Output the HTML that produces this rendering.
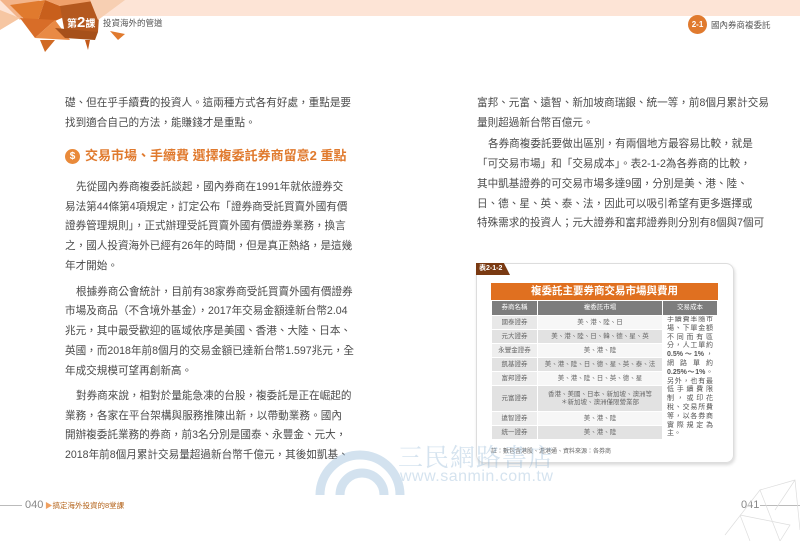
<!DOCTYPE html>
<html><head><meta charset="utf-8"><style>
*{margin:0;padding:0;box-sizing:border-box}
body{width:800px;height:541px;overflow:hidden;background:#fff;position:relative;font-family:"Liberation Sans","Noto Sans CJK TC",sans-serif;color:#444}
.a{position:absolute;white-space:nowrap}
.ln{position:absolute;font-size:10.6px;line-height:14px;color:#4a4a4a;text-align:justify;text-align-last:justify;white-space:nowrap}
.L{left:65px;width:277px}
.R{left:477px;width:258px}
.e{text-align-last:left}
table{border-collapse:collapse;table-layout:fixed}
td{font-size:6.5px;color:#666;text-align:center;border:1px solid #fff;padding:0;line-height:8px;overflow:hidden}
</style></head><body>
<div class="a" style="left:0;top:0;width:800px;height:16px;background:#fde4d6"></div>
<svg class="a" style="left:0;top:0" width="130" height="62" viewBox="0 0 130 62">
<polygon points="0,0 40,0 20,20" fill="#f3b48a"/>
<polygon points="10,5 45,0 35,30" fill="#e07a2e"/>
<polygon points="35,30 45,0 75,12" fill="#c85f1c"/>
<polygon points="45,0 95,0 75,12" fill="#f0a06a"/>
<polygon points="60,6 100,0 98,32 65,34" fill="#b4581e"/>
<polygon points="20,18 55,20 35,38" fill="#d86d28"/>
<polygon points="35,38 55,20 70,40" fill="#e98a45"/>
<polygon points="55,28 98,32 95,40 65,38" fill="#a6501a"/>
<polygon points="0,10 20,18 0,30" fill="#f6c6a2"/>
<polygon points="90,0 125,0 98,20" fill="#f7cfb2"/>
<polygon points="110,31 125,34 118,40" fill="#e07a2e"/>
<polygon points="40,40 55,40 45,52" fill="#d06a24"/>
<polygon points="85,40 90,40 88,50" fill="#c35a1a"/>
</svg>
<div class="a" style="left:67px;top:16px;font-size:10px;color:#fff;font-weight:bold;line-height:14px">第<span style="font-size:15px">2</span>課</div>
<div class="a" style="left:103px;top:17px;font-size:8.5px;color:#555;line-height:12px">投資海外的管道</div>
<div class="a" style="left:688px;top:15px;width:19px;height:19px;border-radius:50%;background:#e07a2e;color:#fff;font-size:8px;font-weight:bold;text-align:center;line-height:19px">2-1</div>
<div class="a" style="left:711px;top:19px;font-size:8.5px;color:#555;line-height:12px">國內券商複委託</div>

<div class="ln L" style="top:96px">礎、但在乎手續費的投資人。這兩種方式各有好處，重點是要</div>
<div class="ln L e" style="top:116px">找到適合自己的方法，能賺錢才是重點。</div>
<div class="a" style="left:65px;top:149px;width:15px;height:15px;border-radius:50%;background:#e98a3a;color:#fff;font-size:10px;font-weight:bold;text-align:center;line-height:15px">$</div>
<div class="a" style="left:85px;top:148px;font-size:13px;color:#e07a2e;font-weight:bold;line-height:16px">交易市場、手續費 選擇複委託券商留意2 重點</div>
<div class="ln L" style="top:180px;padding-left:11px">先從國內券商複委託談起，國內券商在1991年就依證券交</div>
<div class="ln L" style="top:200px">易法第44條第4項規定，訂定公布「證券商受託買賣外國有價</div>
<div class="ln L" style="top:219px">證券管理規則」，正式辦理受託買賣外國有價證券業務，換言</div>
<div class="ln L" style="top:239px">之，國人投資海外已經有26年的時間，但是真正熱絡，是這幾</div>
<div class="ln L e" style="top:259px">年才開始。</div>
<div class="ln L" style="top:285px;padding-left:11px">根據券商公會統計，目前有38家券商受託買賣外國有價證券</div>
<div class="ln L" style="top:304px">市場及商品（不含境外基金），2017年交易金額達新台幣2.04</div>
<div class="ln L" style="top:324px">兆元，其中最受歡迎的區域依序是美國、香港、大陸、日本、</div>
<div class="ln L" style="top:344px">英國，而2018年前8個月的交易金額已達新台幣1.597兆元，全</div>
<div class="ln L e" style="top:364px">年成交規模可望再創新高。</div>
<div class="ln L" style="top:389px;padding-left:11px">對券商來說，相對於量能急凍的台股，複委託是正在崛起的</div>
<div class="ln L" style="top:409px">業務，各家在平台架構與服務推陳出新，以帶動業務。國內</div>
<div class="ln L" style="top:428px">開辦複委託業務的券商，前3名分別是國泰、永豐金、元大，</div>
<div class="ln L" style="top:448px">2018年前8個月累計交易量超過新台幣千億元，其後如凱基、</div>

<div class="ln R" style="top:96px">富邦、元富、遠智、新加坡商瑞銀、統一等，前8個月累計交易</div>
<div class="ln R e" style="top:116px">量則超過新台幣百億元。</div>
<div class="ln R" style="top:137px;padding-left:11px">各券商複委託要做出區別，有兩個地方最容易比較，就是</div>
<div class="ln R" style="top:157px">「可交易市場」和「交易成本」。表2-1-2為各券商的比較，</div>
<div class="ln R" style="top:177px">其中凱基證券的可交易市場多達9國，分別是美、港、陸、</div>
<div class="ln R" style="top:197px">日、德、星、英、泰、法，因此可以吸引希望有更多選擇或</div>
<div class="ln R" style="top:216px">特殊需求的投資人；元大證券和富邦證券則分別有8個與7個可</div>

<div class="a" style="left:476px;top:263px;width:258px;height:200px;border:1px solid #ddd;border-radius:8px;box-shadow:1px 2px 3px rgba(0,0,0,.15)"></div>
<div class="a" style="left:476px;top:263px;width:34px;height:12px;background:#7a3a12;clip-path:polygon(0 0,82% 0,100% 100%,0 100%);color:#fff;font-size:7px;font-weight:bold;line-height:12px;padding-left:3px">表2-1-2</div>
<div class="a" style="left:491px;top:283px;width:227px;height:17px;background:#e07020;color:#fff;font-size:10.5px;font-weight:bold;text-align:center;line-height:17px">複委託主要券商交易市場與費用</div>
<table class="a" style="left:491px;top:300px;width:227px">
<tr style="height:15px;background:#7d7d7d"><td style="width:46px;color:#fff">券商名稱</td><td style="width:125px;color:#fff">複委託市場</td><td style="color:#fff">交易成本</td></tr>
<tr style="height:13px"><td style="background:#e8e8e8">國泰證券</td><td style="background:#f7f7f7">美、港、陸、日</td><td rowspan="8" style="background:#fff;text-align:justify;font-size:7px;line-height:8.8px;padding:0 4px;color:#555;white-space:normal">手續費率隨市場、下單金額不同而有區分，人工單約<b>0.5%～1%</b>，網路單約<b>0.25%～1%</b>。另外，也有最低手續費限制，或印花稅、交易所費等，以各券商實際規定為主。</td></tr>
<tr style="height:13px;background:#e2e2e2"><td>元大證券</td><td>美、港、陸、日、韓、德、星、英</td></tr>
<tr style="height:13px"><td style="background:#eee">永豐金證券</td><td style="background:#f7f7f7">美、港、陸</td></tr>
<tr style="height:13px;background:#e2e2e2"><td>凱基證券</td><td>美、港、陸、日、德、星、英、泰、法</td></tr>
<tr style="height:13px"><td style="background:#eee">富邦證券</td><td style="background:#f7f7f7">美、港、陸、日、英、德、星</td></tr>
<tr style="height:24px;background:#e2e2e2"><td>元富證券</td><td>香港、美國、日本、新加坡、澳洲等<br>＊新加坡、澳洲僅限營業部</td></tr>
<tr style="height:13px"><td style="background:#eee">遠智證券</td><td style="background:#f7f7f7">美、港、陸</td></tr>
<tr style="height:13px;background:#e2e2e2"><td>統一證券</td><td>美、港、陸</td></tr>
</table>
<div class="a" style="left:491px;top:446px;font-size:6px;color:#666">註：數包含港股、滬港通、資料來源：各券商</div>

<svg class="a" style="left:300px;top:415px;opacity:.45" width="110" height="80"><g fill="none" stroke="#9fc0dc" stroke-width="9"><path d="M20 80 A40 40 0 0 1 100 80"/><path d="M40 80 A22 22 0 0 1 84 80"/></g></svg>
<div class="a" style="left:398px;top:438px;font-family:'Liberation Serif','Noto Serif CJK SC',serif;font-size:25px;color:rgba(150,185,215,.4);letter-spacing:1px">三民網路書店</div>
<div class="a" style="left:400px;top:468px;font-size:16px;color:rgba(150,185,215,.4);letter-spacing:.5px">www.sanmin.com.tw</div>

<div class="a" style="left:0;top:505px;width:22px;height:1px;background:#bbb"></div>
<div class="a" style="left:25px;top:499px;font-size:11px;color:#888;line-height:12px">040</div>
<div class="a" style="left:45px;top:500px;font-size:7.5px;color:#b5651d;line-height:11px"><span style="color:#f0a060">▶</span>搞定海外投資的8堂課</div>
<div class="a" style="left:741px;top:499px;font-size:11px;color:#888;line-height:12px">041</div>
<div class="a" style="left:760px;top:505px;width:40px;height:1px;background:#bbb"></div>
<svg class="a" style="left:720px;top:470px" width="80" height="71"><g fill="none" stroke="#ddd" stroke-width=".7"><path d="M5 65 L40 20 L60 71 M40 20 L75 10 L80 60 M20 45 L70 55 L60 71 M75 10 L55 40 M30 71 L20 45"/></g></svg>
</body></html>
